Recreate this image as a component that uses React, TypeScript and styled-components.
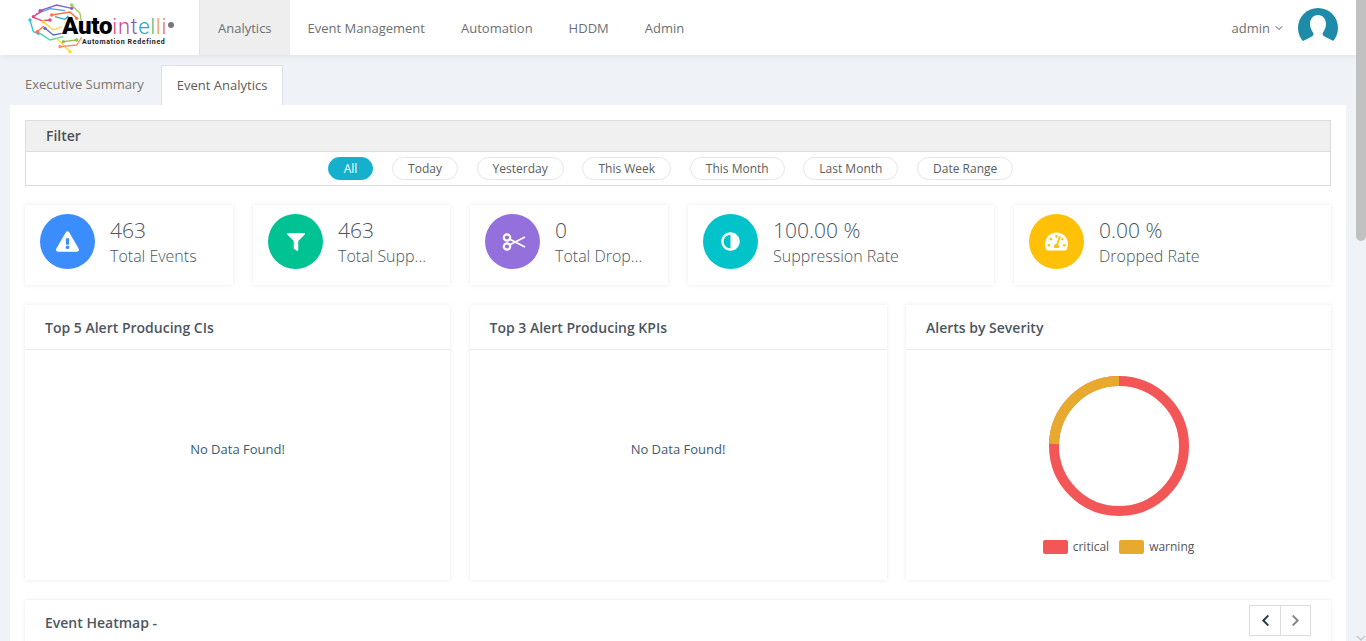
import React from "react";
import styled, { createGlobalStyle } from "styled-components";
import { FaExclamationTriangle, FaFilter, FaAdjust, FaTachometerAlt, FaChevronLeft, FaChevronRight } from "react-icons/fa";
import { FiChevronDown } from "react-icons/fi";

const Global = createGlobalStyle`
  html, body { margin: 0; padding: 0; height: 100%; overflow: hidden; }
  * { box-sizing: border-box; }
  body { font-family: "Open Sans", "Liberation Sans", sans-serif; background: #eff3f8; color: #4a5560; }
`;

const Page = styled.div`
  height: 100vh;
  overflow: hidden;
  padding-right: 10px;
  background: #eff3f8;
  position: relative;
`;

const ScrollThumb = styled.div`
  position: absolute;
  top: 0;
  right: 0;
  width: 10px;
  height: 241px;
  background: #c1c1c1;
  border-radius: 0 0 5px 5px;
`;

const ScrollArrow = styled.svg`
  position: absolute;
  right: 0;
  bottom: 0;
  width: 10px;
  height: 6px;
`;

const TopBar = styled.header`
  height: 55px;
  background: #fff;
  display: flex;
  align-items: stretch;
  box-shadow: 0 2px 6px rgba(0, 0, 0, 0.06);
  padding-right: 18px;
  position: relative;
`;

const LogoBox = styled.div`
  width: 199px;
  flex: none;
  position: relative;
`;

const LogoWord = styled.div`
  position: absolute;
  left: 62px;
  top: 15px;
  font-family: "Roboto", "Liberation Sans", sans-serif;
  font-size: 24px;
  line-height: 22px;
  white-space: nowrap;
  display: flex;
  align-items: baseline;
`;

const LogoBold = styled.span`
  font-weight: 900;
  color: #000;
  letter-spacing: -0.2px;
`;

const LogoLetter = styled.span<{ $c: string }>`
  font-weight: 300;
  font-size: 22px;
  color: ${(p) => p.$c};
  letter-spacing: 0.6px;
`;

const LogoMark = styled.span`
  width: 6px;
  height: 6px;
  border-radius: 50%;
  background: #777;
  align-self: flex-start;
  margin: 7px 0 0 1px;
`;

const LogoTag = styled.div`
  position: absolute;
  left: 82px;
  top: 38px;
  font-family: "Roboto", "Liberation Sans", sans-serif;
  font-size: 7px;
  line-height: 9px;
  font-weight: 700;
  letter-spacing: 0.65px;
  color: #222;
  white-space: nowrap;
`;

const Nav = styled.nav`
  display: flex;
  align-items: stretch;
`;

const NavItem = styled.a<{ $active?: boolean }>`
  display: flex;
  align-items: center;
  padding: 1px 18px 0;
  font-size: 13px;
  color: #6c6f72;
  background: ${(p) => (p.$active ? "#eeeeee" : "transparent")};
  border-left: ${(p) => (p.$active ? "1px solid #e2e2e2" : "none")};
`;

const UserArea = styled.div`
  margin-left: auto;
  display: flex;
  align-items: center;
`;

const UserName = styled.span`
  font-size: 13px;
  color: #6c6f72;
  margin-right: 3px;
`;

const Avatar = styled.svg`
  width: 40px;
  height: 40px;
  margin-left: 13px;
  margin-top: 1px;
`;

const Tabs = styled.div`
  height: 50px;
  padding: 10px 0 0 9px;
  display: flex;
  align-items: stretch;
`;

const Tab = styled.div<{ $active?: boolean }>`
  display: flex;
  align-items: center;
  padding: 0 15px ${(p) => (p.$active ? "2px" : "4px")};
  margin-left: ${(p) => (p.$active ? "1px" : "0")};
  font-size: 13px;
  color: ${(p) => (p.$active ? "#5f5a55" : "#7b746c")};
  background: ${(p) => (p.$active ? "#fff" : "transparent")};
  border: ${(p) => (p.$active ? "1px solid #dde0e4" : "1px solid transparent")};
  border-bottom: none;
`;

const Panel = styled.main`
  margin: 0 10px;
  background: #fff;
  padding: 15px 15px 40px;
`;

const FilterBox = styled.section`
  border: 1px solid #dcdcdc;
  height: 66px;
`;

const FilterHead = styled.div`
  height: 31px;
  background: #f0f0f0;
  border-bottom: 1px solid #dcdcdc;
  padding: 0 20px 2px;
  display: flex;
  align-items: center;
  font-size: 14px;
  font-weight: 600;
  color: #4b4f55;
`;

const PillRow = styled.div`
  display: flex;
  justify-content: center;
  gap: 18.7px;
  padding: 5px 15px 0 0;
`;

const Pill = styled.button<{ $active?: boolean }>`
  height: 23px;
  padding: 0 15px;
  border-radius: 12px;
  font-family: inherit;
  font-size: 12px;
  line-height: 21px;
  border: 1px solid ${(p) => (p.$active ? "#14b0cc" : "#e4e6e8")};
  background: ${(p) => (p.$active ? "#14b0cc" : "#fff")};
  color: ${(p) => (p.$active ? "#fff" : "#5a5d60")};
`;

const Card = styled.div`
  background: #fff;
  box-shadow: 0 0 4px rgba(0, 0, 0, 0.09);
`;

const StatRow = styled.div`
  display: grid;
  grid-template-columns: 208px 197px 198px 306px 317px;
  gap: 20px;
  margin-top: 19px;
`;

const StatCard = styled(Card)`
  height: 80px;
  display: flex;
  align-items: flex-start;
  padding: 9px 15px 0;
  min-width: 0;
`;

const StatIcon = styled.div<{ $bg: string; $size: number }>`
  width: 55px;
  height: 55px;
  flex: none;
  border-radius: 50%;
  background: ${(p) => p.$bg};
  color: #fff;
  font-size: ${(p) => p.$size}px;
  display: flex;
  align-items: center;
  justify-content: center;
`;

const FlippedAdjust = styled(FaAdjust)`
  transform: scaleX(-1);
`;

const Scissors = styled.svg`
  width: 24px;
  height: 18px;
  margin-left: 2px;
`;

const StatText = styled.div`
  margin: 2.5px 0 0 15px;
  min-width: 0;
`;

const StatValue = styled.div`
  font-size: 21px;
  font-weight: 300;
  line-height: 27px;
  color: #4a5560;
`;

const StatLabel = styled.div`
  font-size: 16px;
  font-weight: 300;
  line-height: 25px;
  color: #4a5560;
  white-space: nowrap;
`;

const ChartRow = styled.div`
  display: grid;
  grid-template-columns: 425px 417px 425px;
  gap: 20px 19.5px;
  margin-top: 20px;
`;

const ChartCard = styled(Card)`
  height: 275px;
  display: flex;
  flex-direction: column;
`;

const CardTitle = styled.div`
  height: 45px;
  flex: none;
  padding: 0 20px;
  display: flex;
  align-items: center;
  border-bottom: 1px solid #e9ecef;
  font-size: 14px;
  font-weight: 600;
  color: #4d5660;
`;

const EmptyBody = styled.div`
  flex: 1;
  display: flex;
  align-items: center;
  justify-content: center;
  padding-bottom: 32px;
  font-size: 13px;
  color: #415a72;
`;

const DonutBody = styled.div`
  flex: 1;
  display: flex;
  flex-direction: column;
  align-items: center;
  padding-top: 26px;
`;

const Donut = styled.svg`
  width: 140px;
  height: 140px;
  display: block;
`;

const Legend = styled.div`
  display: flex;
  align-items: center;
  margin-top: 24px;
  font-size: 12px;
  line-height: 14px;
  color: #555;
`;

const Swatch = styled.span<{ $c: string }>`
  width: 25px;
  height: 14px;
  border-radius: 2px;
  background: ${(p) => p.$c};
  margin-right: 5px;
`;

const LegendLabel = styled.span`
  margin-right: 10px;
  &:last-child { margin-right: 0; }
`;

const HeatCard = styled(Card)`
  margin-top: 20px;
  height: 900px;
`;

const HeatHead = styled.div`
  height: 45px;
  padding: 5px 20px 0;
  display: flex;
  justify-content: space-between;
  align-items: flex-start;
`;

const HeatTitle = styled.div`
  font-size: 14px;
  font-weight: 600;
  color: #4d5660;
  line-height: 36px;
`;

const PagerGroup = styled.div`
  display: flex;
  height: 31px;
  border: 1px solid #dcdcdc;
`;

const PagerBtn = styled.div<{ $on?: boolean }>`
  width: 30px;
  display: flex;
  align-items: center;
  justify-content: center;
  font-size: 13px;
  color: ${(p) => (p.$on ? "#2f3a46" : "#888")};
  & + & { border-left: 1px solid #dcdcdc; }
`;

const LogoArt = styled.svg`
  position: absolute;
  left: 0;
  top: 0;
  width: 100px;
  height: 55px;
`;

const circuit: [string, string][] = [
  ["M120 32 L170 15 L215 25", "#8e5fc7"],
  ["M108 42 L150 26 L195 32", "#42a5f5"],
  ["M155 45 L210 36 L230 55", "#ff7043"],
  ["M215 15 L240 40 L245 70", "#9ccc65"],
  ["M100 50 L130 30", "#ec407a"],
  ["M90 60 L100 95 L115 100", "#26c6da"],
  ["M112 95 L132 78", "#ff7043"],
  ["M100 52 L125 62 L150 60", "#ec407a"],
  ["M130 65 L160 90 L185 80", "#fdd835"],
  ["M135 85 L160 105 L185 100", "#5c6bc0"],
  ["M120 100 L150 120 L190 110", "#4dd0b1"],
  ["M170 115 L210 155", "#fdd835"],
  ["M190 125 L230 120", "#8bc34a"],
  ["M180 140 L230 135 L245 112", "#ff8a65"],
  ["M165 50 L195 58 L205 48", "#26a6c9"],
];

const nodes: [number, number, string][] = [
  [120, 32, "#8e5fc7"], [215, 25, "#8e5fc7"], [215, 15, "#9ccc65"], [100, 50, "#ec407a"],
  [90, 60, "#26c6da"], [115, 100, "#26c6da"], [112, 95, "#ff7043"], [130, 65, "#fdd835"],
  [135, 85, "#5c6bc0"], [210, 155, "#fdd835"], [190, 125, "#8bc34a"], [230, 120, "#8bc34a"],
  [180, 140, "#ff8a65"], [155, 45, "#ff7043"], [230, 55, "#ff7043"], [150, 60, "#ec407a"],
];

const Logo = () => (
  <LogoBox>
    <LogoArt viewBox="0 0 300 165">
      <g fill="none" strokeWidth="4">
        {circuit.map(([d, c]) => (
          <path key={d} d={d} stroke={c} />
        ))}
      </g>
      {nodes.map(([x, y, c]) => (
        <circle key={`${x}-${y}`} cx={x} cy={y} r="5" fill={c} />
      ))}
    </LogoArt>
    <LogoWord>
      <LogoBold>Auto</LogoBold>
      <LogoLetter $c="#ec407a">i</LogoLetter>
      <LogoLetter $c="#c2499b">n</LogoLetter>
      <LogoLetter $c="#7e57c2">t</LogoLetter>
      <LogoLetter $c="#26a6c9">e</LogoLetter>
      <LogoLetter $c="#4dc08a">l</LogoLetter>
      <LogoLetter $c="#f0a030">l</LogoLetter>
      <LogoLetter $c="#ef7050">i</LogoLetter>
      <LogoMark />
    </LogoWord>
    <LogoTag>Automation Redefined</LogoTag>
  </LogoBox>
);

const ScissorsIcon = () => (
  <Scissors viewBox="0 0 24 18" fill="none" stroke="#fff">
    <circle cx="5" cy="4.500" r="3.200" strokeWidth="2.200" />
    <circle cx="5" cy="13.500" r="3.200" strokeWidth="2.200" />
    <path d="M7.800 6.200 L23 14 M7.800 11.800 L23 4" strokeWidth="1.800" />
  </Scissors>
);

const stats = [
  { v: "463", l: "Total Events", c: "#3a8dfb", s: 23, i: <FaExclamationTriangle /> },
  { v: "463", l: "Total Supp...", c: "#00c292", s: 18, i: <FaFilter /> },
  { v: "0", l: "Total Drop...", c: "#9370db", s: 20, i: <ScissorsIcon /> },
  { v: "100.00 %", l: "Suppression Rate", c: "#03c3ca", s: 19, i: <FlippedAdjust /> },
  { v: "0.00 %", l: "Dropped Rate", c: "#ffc107", s: 23, i: <FaTachometerAlt /> },
];

const pills = ["All", "Today", "Yesterday", "This Week", "This Month", "Last Month", "Date Range"];

export default function App() {
  return (
    <Page>
      <Global />
      <TopBar>
        <Logo />
        <Nav>
          <NavItem $active>Analytics</NavItem>
          <NavItem>Event Management</NavItem>
          <NavItem>Automation</NavItem>
          <NavItem>HDDM</NavItem>
          <NavItem>Admin</NavItem>
        </Nav>
        <UserArea>
          <UserName>admin</UserName>
          <FiChevronDown size={12} color="#555" />
          <Avatar viewBox="0 0 40 40">
            <circle cx="20" cy="20" r="20" fill="#1e8ba8" />
            <path
              fill="#fff"
              d="M20 7c5 0 8 4 8 9 0 4-2 7-3.500 9.500 0 1.500 1 2.500 3 3.500l8 4L37 41H3l2-8 8-4c2-1 2.500-2 2.500-3.500C14 23 12 20 12 16c0-5 3-9 8-9z"
            />
          </Avatar>
        </UserArea>
      </TopBar>
      <Tabs>
        <Tab>Executive Summary</Tab>
        <Tab $active>Event Analytics</Tab>
      </Tabs>
      <Panel>
        <FilterBox>
          <FilterHead>Filter</FilterHead>
          <PillRow>
            {pills.map((p, i) => (
              <Pill key={p} $active={i === 0}>{p}</Pill>
            ))}
          </PillRow>
        </FilterBox>
        <StatRow>
          {stats.map((s) => (
            <StatCard key={s.l}>
              <StatIcon $bg={s.c} $size={s.s}>{s.i}</StatIcon>
              <StatText>
                <StatValue>{s.v}</StatValue>
                <StatLabel>{s.l}</StatLabel>
              </StatText>
            </StatCard>
          ))}
        </StatRow>
        <ChartRow>
          <ChartCard>
            <CardTitle>Top 5 Alert Producing CIs</CardTitle>
            <EmptyBody>No Data Found!</EmptyBody>
          </ChartCard>
          <ChartCard>
            <CardTitle>Top 3 Alert Producing KPIs</CardTitle>
            <EmptyBody>No Data Found!</EmptyBody>
          </ChartCard>
          <ChartCard>
            <CardTitle>Alerts by Severity</CardTitle>
            <DonutBody>
              <Donut viewBox="0 0 140 140">
                <circle cx="70" cy="70" r="65" fill="none" stroke="#f25656" strokeWidth="10" />
                <path d="M70 5 A65 65 0 0 0 5 68" fill="none" stroke="#e8aa2e" strokeWidth="10" />
              </Donut>
              <Legend>
                <Swatch $c="#f25656" />
                <LegendLabel>critical</LegendLabel>
                <Swatch $c="#e8aa2e" />
                <LegendLabel>warning</LegendLabel>
              </Legend>
            </DonutBody>
          </ChartCard>
        </ChartRow>
        <HeatCard>
          <HeatHead>
            <HeatTitle>Event Heatmap -</HeatTitle>
            <PagerGroup>
              <PagerBtn $on><FaChevronLeft /></PagerBtn>
              <PagerBtn><FaChevronRight /></PagerBtn>
            </PagerGroup>
          </HeatHead>
        </HeatCard>
      </Panel>
      <ScrollThumb />
      <ScrollArrow viewBox="0 0 10 6">
        <path d="M1 1 L5 5 L9 1" fill="none" stroke="#c8c8c8" strokeWidth="1.500" />
      </ScrollArrow>
    </Page>
  );
}
